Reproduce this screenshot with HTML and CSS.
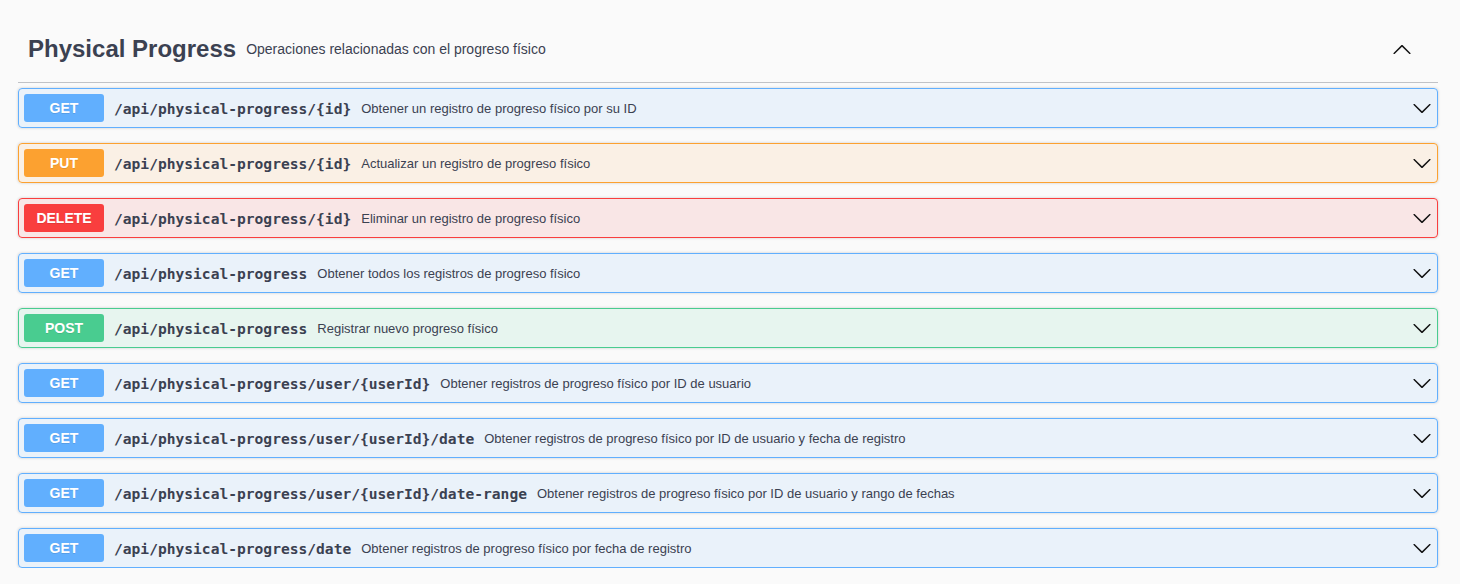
FILE: index.html
```html
<!DOCTYPE html>
<html lang="es">
<head>
<meta charset="utf-8">
<title>Physical Progress</title>
<link rel="stylesheet" href="styles.css">
</head>
<body>
<div class="wrapper">
  <section class="tag-section">
    <h3 class="opblock-tag">
      <span class="tag-name">Physical Progress</span>
      <small class="tag-desc">Operaciones relacionadas con el progreso físico</small>
      <svg class="tag-arrow" width="20" height="20" viewBox="0 0 20 20"><path d="M17.418 14.908c.272.268.709.268.979 0s.271-.701 0-.969l-7.908-7.83c-.27-.268-.707-.268-.979 0l-7.908 7.83c-.27.268-.27.701 0 .969.271.268.709.268.979 0L10 7.767l7.418 7.141z"/></svg>
    </h3>
    <div class="ops">
      <div class="opblock get"><div class="summary"><span class="method">GET</span><span class="path">/api/physical-progress/{id}</span><span class="desc">Obtener un registro de progreso físico por su ID</span><svg class="arrow" width="20" height="20" viewBox="0 0 20 20"><path d="M17.418 6.109c.272-.268.709-.268.979 0s.271.701 0 .969l-7.908 7.83c-.27.268-.707.268-.979 0l-7.908-7.83c-.27-.268-.27-.701 0-.969.271-.268.709-.268.979 0L10 13.25l7.418-7.141z"/></svg></div></div>
      <div class="opblock put"><div class="summary"><span class="method">PUT</span><span class="path">/api/physical-progress/{id}</span><span class="desc">Actualizar un registro de progreso físico</span><svg class="arrow" width="20" height="20" viewBox="0 0 20 20"><path d="M17.418 6.109c.272-.268.709-.268.979 0s.271.701 0 .969l-7.908 7.83c-.27.268-.707.268-.979 0l-7.908-7.83c-.27-.268-.27-.701 0-.969.271-.268.709-.268.979 0L10 13.25l7.418-7.141z"/></svg></div></div>
      <div class="opblock delete"><div class="summary"><span class="method">DELETE</span><span class="path">/api/physical-progress/{id}</span><span class="desc">Eliminar un registro de progreso físico</span><svg class="arrow" width="20" height="20" viewBox="0 0 20 20"><path d="M17.418 6.109c.272-.268.709-.268.979 0s.271.701 0 .969l-7.908 7.83c-.27.268-.707.268-.979 0l-7.908-7.83c-.27-.268-.27-.701 0-.969.271-.268.709-.268.979 0L10 13.25l7.418-7.141z"/></svg></div></div>
      <div class="opblock get"><div class="summary"><span class="method">GET</span><span class="path">/api/physical-progress</span><span class="desc">Obtener todos los registros de progreso físico</span><svg class="arrow" width="20" height="20" viewBox="0 0 20 20"><path d="M17.418 6.109c.272-.268.709-.268.979 0s.271.701 0 .969l-7.908 7.83c-.27.268-.707.268-.979 0l-7.908-7.83c-.27-.268-.27-.701 0-.969.271-.268.709-.268.979 0L10 13.25l7.418-7.141z"/></svg></div></div>
      <div class="opblock post"><div class="summary"><span class="method">POST</span><span class="path">/api/physical-progress</span><span class="desc">Registrar nuevo progreso físico</span><svg class="arrow" width="20" height="20" viewBox="0 0 20 20"><path d="M17.418 6.109c.272-.268.709-.268.979 0s.271.701 0 .969l-7.908 7.83c-.27.268-.707.268-.979 0l-7.908-7.83c-.27-.268-.27-.701 0-.969.271-.268.709-.268.979 0L10 13.25l7.418-7.141z"/></svg></div></div>
      <div class="opblock get"><div class="summary"><span class="method">GET</span><span class="path">/api/physical-progress/user/{userId}</span><span class="desc">Obtener registros de progreso físico por ID de usuario</span><svg class="arrow" width="20" height="20" viewBox="0 0 20 20"><path d="M17.418 6.109c.272-.268.709-.268.979 0s.271.701 0 .969l-7.908 7.83c-.27.268-.707.268-.979 0l-7.908-7.83c-.27-.268-.27-.701 0-.969.271-.268.709-.268.979 0L10 13.25l7.418-7.141z"/></svg></div></div>
      <div class="opblock get"><div class="summary"><span class="method">GET</span><span class="path">/api/physical-progress/user/{userId}/date</span><span class="desc">Obtener registros de progreso físico por ID de usuario y fecha de registro</span><svg class="arrow" width="20" height="20" viewBox="0 0 20 20"><path d="M17.418 6.109c.272-.268.709-.268.979 0s.271.701 0 .969l-7.908 7.83c-.27.268-.707.268-.979 0l-7.908-7.830c-.27-.268-.27-.701 0-.969.271-.268.709-.268.979 0L10 13.25l7.418-7.141z"/></svg></div></div>
      <div class="opblock get"><div class="summary"><span class="method">GET</span><span class="path">/api/physical-progress/user/{userId}/date-range</span><span class="desc">Obtener registros de progreso físico por ID de usuario y rango de fechas</span><svg class="arrow" width="20" height="20" viewBox="0 0 20 20"><path d="M17.418 6.109c.272-.268.709-.268.979 0s.271.701 0 .969l-7.908 7.83c-.27.268-.707.268-.979 0l-7.908-7.83c-.27-.268-.27-.701 0-.969.271-.268.709-.268.979 0L10 13.25l7.418-7.141z"/></svg></div></div>
      <div class="opblock get"><div class="summary"><span class="method">GET</span><span class="path">/api/physical-progress/date</span><span class="desc">Obtener registros de progreso físico por fecha de registro</span><svg class="arrow" width="20" height="20" viewBox="0 0 20 20"><path d="M17.418 6.109c.272-.268.709-.268.979 0s.271.701 0 .969l-7.908 7.83c-.27.268-.707.268-.979 0l-7.908-7.83c-.27-.268-.27-.701 0-.969.271-.268.709-.268.979 0L10 13.25l7.418-7.141z"/></svg></div></div>
    </div>
  </section>
</div>
</body>
</html>
```

FILE: styles.css
```css
html, body {
  margin: 0;
  padding: 0;
  background: #fafafa;
}

body {
  font-family: "Liberation Sans", Arial, sans-serif;
  color: #3b4151;
}

.wrapper {
  padding: 16px 0 0 18px;
  width: 1420px;
}

.opblock-tag {
  display: flex;
  align-items: center;
  height: 46px;
  margin: 0 0 5px;
  padding: 10px 20px 10px 10px;
  border-bottom: 1px solid rgba(59, 65, 81, 0.3);
  font-size: 24px;
  font-weight: 700;
  color: #3b4151;
}

.tag-name {
  white-space: nowrap;
}

.tag-desc {
  flex: 1;
  padding: 0 10px;
  font-size: 14px;
  font-weight: 400;
}

.tag-arrow {
  margin-right: 6px;
  fill: #111;
}

.ops {
  display: flex;
  flex-direction: column;
  gap: 15px;
}

.opblock {
  border: 1px solid #000;
  border-radius: 4px;
  box-shadow: 0 0 3px rgba(0, 0, 0, 0.19);
}

.summary {
  display: flex;
  align-items: center;
  padding: 5px;
}

.method {
  min-width: 80px;
  padding: 6px 0;
  border-radius: 3px;
  font-size: 14px;
  line-height: 16px;
  font-weight: 700;
  text-align: center;
  color: #fff;
  text-shadow: 0 1px 0 rgba(0, 0, 0, 0.1);
}

.path {
  padding: 0 10px;
  font-family: "DejaVu Sans Mono", monospace;
  font-size: 14.6px;
  font-weight: 700;
  color: #3b4151;
  white-space: nowrap;
}

.desc {
  flex: 1;
  font-size: 13px;
  color: #3b4151;
}

.arrow {
  fill: #111;
  flex: none;
}

.get { background: rgba(97, 175, 254, 0.1); border-color: #61affe; }
.get .method { background: #61affe; }

.put { background: rgba(252, 161, 48, 0.1); border-color: #fca130; }
.put .method { background: #fca130; }

.delete { background: rgba(249, 62, 62, 0.1); border-color: #f93e3e; }
.delete .method { background: #f93e3e; }

.post { background: rgba(73, 204, 144, 0.1); border-color: #49cc90; }
.post .method { background: #49cc90; }
```
